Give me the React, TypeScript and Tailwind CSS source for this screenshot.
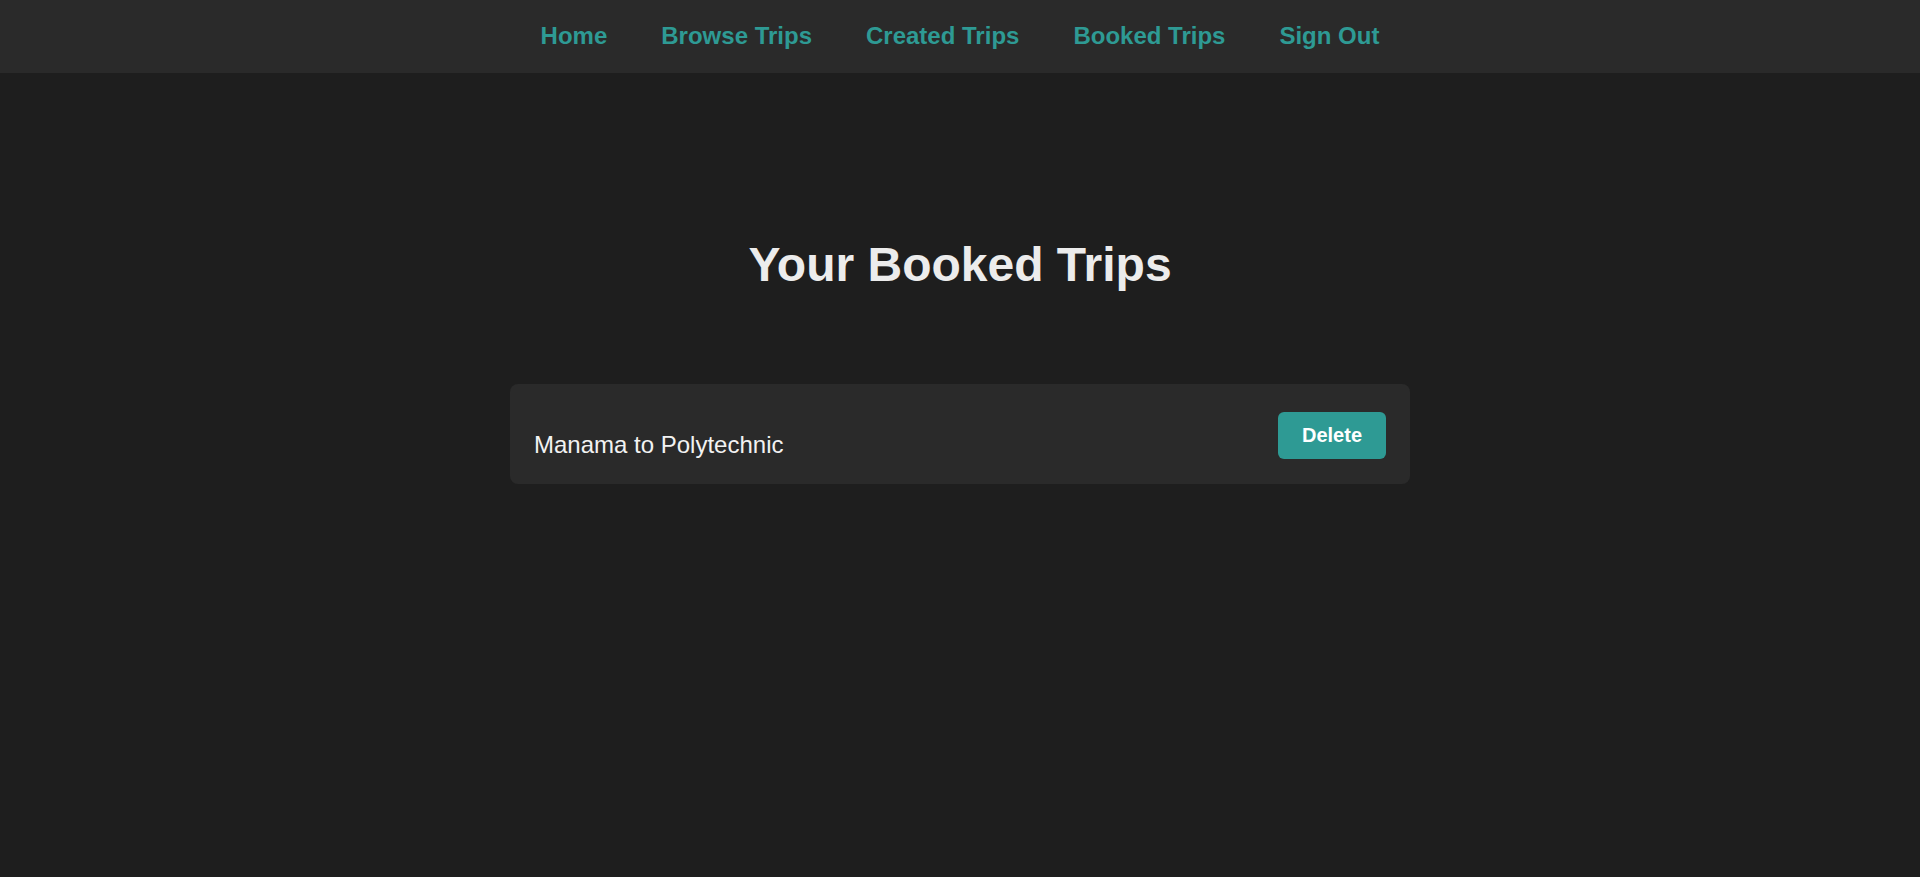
const links = ['Home', 'Browse Trips', 'Created Trips', 'Booked Trips', 'Sign Out'];

const trips = [{ id: 1, title: 'Manama to Polytechnic' }];

export default function App() {
  return (
    <div className="min-h-[877px] bg-[#1e1e1e] font-['Liberation_Sans',Arial,sans-serif]">
      {/* Top navigation */}
      <nav className="h-[73px] bg-[#2a2a2a] flex items-center justify-center gap-[54px]">
        {links.map((l) => (
          <a key={l} href="#" className="text-[24px] font-bold text-[#2e9a94] leading-[normal] -mt-[2px]">
            {l}
          </a>
        ))}
      </nav>

      <main className="flex flex-col items-center">
        <h1 className="mt-[164px] text-[48px] font-bold text-[#ececec] leading-[normal]">
          Your Booked Trips
        </h1>

        <div className="mt-[92px] w-[900px] flex flex-col gap-4">
          {trips.map((t) => (
            <div
              key={t.id}
              className="bg-[#2a2a2a] rounded-lg px-6 pt-[28px] pb-[25px] flex items-end justify-between"
            >
              <span className="text-[24px] text-[#f2f2f2] leading-[normal]">{t.title}</span>
              <button className="bg-[#2e9a94] text-white font-bold text-[20px] leading-[normal] px-6 py-3 rounded-md">
                Delete
              </button>
            </div>
          ))}
        </div>
      </main>
    </div>
  );
}
